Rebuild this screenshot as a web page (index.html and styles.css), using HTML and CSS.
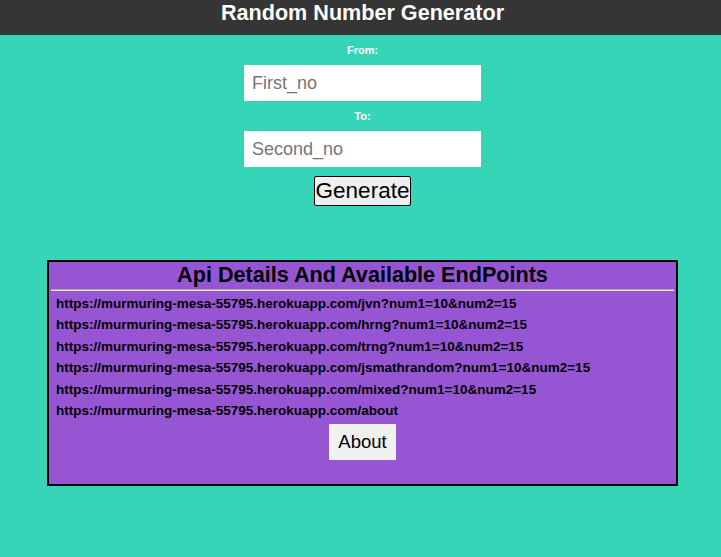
FILE: index.html
```html
<!DOCTYPE html>
<html>
<head>
<meta charset="utf-8">
<title>Random Number Generator</title>
<link rel="stylesheet" href="styles.css">
</head>
<body>
<header class="topbar">
  <h1 class="title">Random Number Generator</h1>
</header>
<main class="main">
  <form class="form">
    <label class="field-label" for="first">From:</label>
    <input class="field" id="first" type="text" placeholder="First_no">
    <label class="field-label" for="second">To:</label>
    <input class="field" id="second" type="text" placeholder="Second_no">
    <button class="generate" type="button">Generate</button>
  </form>
  <section class="api">
    <h2 class="api-title">Api Details And Available EndPoints</h2>
    <hr class="rule">
    <ul class="endpoints">
      <li>https://murmuring-mesa-55795.herokuapp.com/jvn?num1=10&amp;num2=15</li>
      <li>https://murmuring-mesa-55795.herokuapp.com/hrng?num1=10&amp;num2=15</li>
      <li>https://murmuring-mesa-55795.herokuapp.com/trng?num1=10&amp;num2=15</li>
      <li>https://murmuring-mesa-55795.herokuapp.com/jsmathrandom?num1=10&amp;num2=15</li>
      <li>https://murmuring-mesa-55795.herokuapp.com/mixed?num1=10&amp;num2=15</li>
      <li>https://murmuring-mesa-55795.herokuapp.com/about</li>
    </ul>
    <div class="about-row">
      <button class="about" type="button">About</button>
    </div>
  </section>
</main>
</body>
</html>
```
FILE: styles.css
```css
html, body {
  margin: 0;
  padding: 0;
}
body {
  background: #37d5b8;
  font-family: "Liberation Sans", Arial, sans-serif;
  height: 557px;
}
.topbar {
  background: #353535;
  height: 35px;
  padding-left: 4px;
}
.title {
  margin: 0;
  color: #fff;
  font-size: 21.6px;
  line-height: 25px;
  text-align: center;
  font-weight: bold;
}
.main {
  padding: 0 43px 0 47px;
}
.form {
  display: flex;
  flex-direction: column;
  align-items: center;
  margin: 0;
}
.field-label {
  color: #fff;
  font-size: 11px;
  font-weight: bold;
  line-height: 13px;
  margin: 9px 0 8px;
}
.field {
  box-sizing: border-box;
  width: 237px;
  height: 36px;
  border: none;
  padding: 0 8px;
  font-family: "Liberation Sans", Arial, sans-serif;
  font-size: 18px;
  background: #fff;
  outline: none;
}
.field::placeholder {
  color: #757575;
}
.generate {
  margin-top: 9px;
  font-family: "Liberation Sans", Arial, sans-serif;
  font-size: 22.5px;
  line-height: 25px;
  padding: 1px 1px 2px;
  border: 1px solid #000;
  border-radius: 2px;
  background: #efefef;
  color: #000;
}
.api {
  margin-top: 54px;
  border: 2px solid #000;
  background: #9656d4;
  height: 226px;
  box-sizing: border-box;
}
.api-title {
  margin: 0;
  font-size: 21.6px;
  line-height: 25px;
  text-align: center;
  color: #000;
}
.rule {
  margin: 2px 2px 0;
  border: none;
  border-top: 1px solid #a9a9a9;
  border-bottom: 1px solid #e6e6e6;
  height: 0;
}
.endpoints {
  list-style: none;
  margin: 0;
  padding: 2px 0 0 7px;
}
.endpoints li {
  font-size: 13.5px;
  font-weight: bold;
  line-height: 21.4px;
  color: #000;
}
.about-row {
  display: flex;
  justify-content: center;
  margin-top: 3px;
}
.about {
  font-family: "Liberation Sans", Arial, sans-serif;
  font-size: 18.5px;
  line-height: 20px;
  padding: 8px 9px;
  border: none;
  background: #f0f0f0;
  color: #000;
}
```
